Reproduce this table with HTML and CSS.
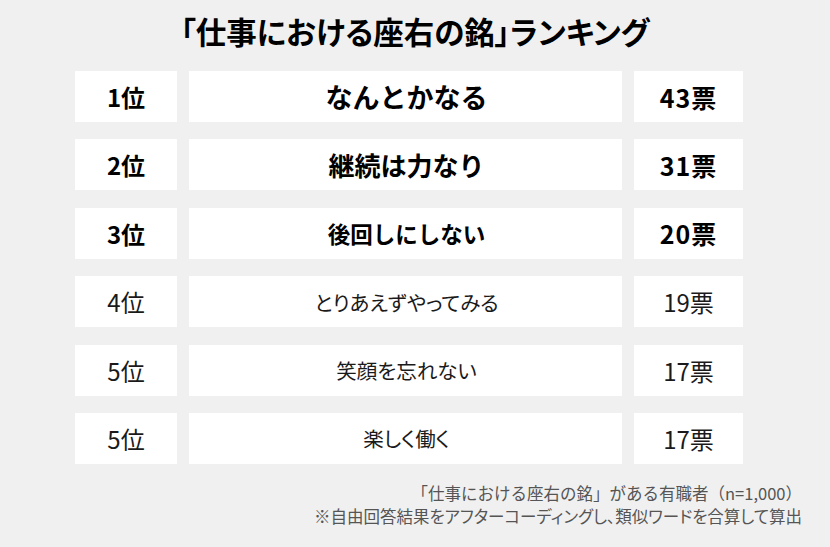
FILE: index.html
```html
<!DOCTYPE html>
<html lang="ja">
<head>
<meta charset="utf-8">
<title>「仕事における座右の銘」ランキング</title>
<link rel="stylesheet" href="styles.css">
</head>
<body>
<main class="page">
  <h1 class="title">「仕事における座右の銘」ランキング</h1>
  <section class="ranking">
    <div class="row top">
      <div class="cell rank">1位</div>
      <div class="cell motto big">なんとかなる</div>
      <div class="cell votes">43票</div>
    </div>
    <div class="row top">
      <div class="cell rank">2位</div>
      <div class="cell motto mid">継続は力なり</div>
      <div class="cell votes">31票</div>
    </div>
    <div class="row top">
      <div class="cell rank">3位</div>
      <div class="cell motto small">後回しにしない</div>
      <div class="cell votes">20票</div>
    </div>
    <div class="row">
      <div class="cell rank">4位</div>
      <div class="cell motto">とりあえずやってみる</div>
      <div class="cell votes">19票</div>
    </div>
    <div class="row">
      <div class="cell rank">5位</div>
      <div class="cell motto">笑顔を忘れない</div>
      <div class="cell votes">17票</div>
    </div>
    <div class="row">
      <div class="cell rank">5位</div>
      <div class="cell motto">楽しく働く</div>
      <div class="cell votes">17票</div>
    </div>
  </section>
  <footer class="notes">
    <p class="sample">「仕事における座右の銘」がある有職者（n=1,000）</p>
    <p class="method">※自由回答結果をアフターコーディングし、類似ワードを合算して算出</p>
  </footer>
</main>
</body>
</html>
```

FILE: styles.css
```css
html, body {
  margin: 0;
  padding: 0;
  background: #f0f0f0;
}

body {
  font-family: "Noto Sans CJK JP", "Noto Sans", sans-serif;
  color: #111;
  width: 830px;
  height: 547px;
  overflow: hidden;
}

.page {
  display: flex;
  flex-direction: column;
}

.title {
  margin: 13px 0 0 0;
  font-size: 30.5px;
  line-height: 36px;
  font-weight: 700;
  text-align: center;
  color: #000;
  font-feature-settings: "palt";
}

.ranking {
  margin-top: 22px;
  padding-left: 75px;
  display: grid;
  row-gap: 17.4px;
}

.row {
  display: grid;
  grid-template-columns: 102px 433px 109px;
  column-gap: 12px;
  height: 51px;
}

.cell {
  background: #ffffff;
  display: flex;
  align-items: center;
  justify-content: center;
  color: #1a1a1a;
}

.rank, .votes {
  font-size: 24px;
}

.motto {
  font-size: 20.5px;
  font-feature-settings: "palt";
  padding-left: 2px;
}

.top .cell {
  font-weight: 700;
  color: #000;
}

.top .rank {
  font-size: 24px;
}

.top .votes {
  font-size: 25px;
  letter-spacing: 1px;
}

.top .motto {
  font-feature-settings: normal;
}

.motto.big { font-size: 27px; }
.motto.mid { font-size: 26px; }
.motto.small { font-size: 22.5px; }

.notes {
  margin-top: 18px;
  padding-right: 28px;
  text-align: right;
  color: #555;
  font-size: 16.5px;
  line-height: 23px;
}

.notes p {
  margin: 0;
}

.notes .method {
  font-feature-settings: "palt";
}
```
